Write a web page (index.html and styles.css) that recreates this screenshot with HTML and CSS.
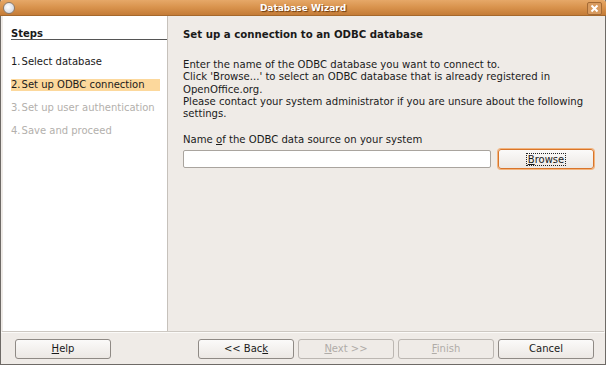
FILE: index.html
```html
<!DOCTYPE html>
<html lang="en">
<head>
  <meta charset="UTF-8">
  <title>Database Wizard</title>
  <link rel="stylesheet" href="styles.css">
</head>
<body>
  <div class="window">
    <div class="titlebar">
      <span class="win-icon"></span>
      <span class="title">Database Wizard</span>
      <span class="close">
        <svg width="9" height="9" viewBox="0 0 9 9"><path d="M1.5 1.5 L7.5 7.5 M7.5 1.5 L1.5 7.5" stroke="#fff" stroke-width="2"/></svg>
      </span>
    </div>

    <div class="main">
      <!-- Steps list -->
      <div class="steps">
        <div class="steps-head">Steps</div>
        <ul class="step-list">
          <li><span class="num">1.</span>Select database</li>
          <li class="active"><span class="num">2.</span>Set up ODBC connection</li>
          <li class="disabled"><span class="num">3.</span>Set up user authentication</li>
          <li class="disabled"><span class="num">4.</span>Save and proceed</li>
        </ul>
      </div>

      <!-- Page content -->
      <div class="content">
        <h2>Set up a connection to an ODBC database</h2>
        <p class="intro">
          Enter the name of the ODBC database you want to connect to.<br>
          Click 'Browse...' to select an ODBC database that is already registered in OpenOffice.org.<br>
          Please contact your system administrator if you are unsure about the following settings.
        </p>
        <label class="field-label">Name <u>o</u>f the ODBC data source on your system</label>
        <div class="field-row">
          <input type="text" class="field">
          <button class="btn focused"><span class="focus-box"><u>B</u>rowse</span></button>
        </div>
      </div>
    </div>

    <div class="footer">
      <button class="btn"><u>H</u>elp</button>
      <div class="nav">
        <button class="btn">&lt;&lt; Bac<u>k</u></button>
        <button class="btn" disabled><u>N</u>ext &gt;&gt;</button>
        <button class="btn" disabled><u>F</u>inish</button>
        <button class="btn">Cancel</button>
      </div>
    </div>
  </div>
</body>
</html>
```

FILE: styles.css
```css
body {
  margin: 0;
  font-family: 'DejaVu Sans', sans-serif;
  font-size: 10.1px;
  color: #1a1a1a;
  background: #fff;
}
.window {
  width: 606px;
  height: 365px;
  box-sizing: border-box;
  background: #efebe7;
  border: 1px solid #6e6a66;
  border-top: none;
  display: flex;
  flex-direction: column;
}
.titlebar {
  height: 16px;
  margin: 0 -1px;
  background: linear-gradient(#e6a868, #d8924c 50%, #c47c38);
  border-bottom: 1px solid #a5682c;
  border-radius: 3px 3px 0 0;
  box-sizing: border-box;
  position: relative;
  display: flex;
  align-items: center;
  justify-content: center;
}
.title {
  color: #fff;
  font-weight: bold;
  font-size: 9px;
  text-shadow: 1px 1px 1px #6a3a10;
}
.win-icon {
  position: absolute;
  left: 3px;
  top: 2px;
  width: 10px;
  height: 10px;
  border-radius: 50%;
  background: radial-gradient(circle at 40% 40%, #fff, #c8ccd8);
  border: 1px solid #8a7a6a;
}
.close {
  position: absolute;
  right: 4px;
  top: 2px;
  width: 13px;
  height: 11px;
  border: 1px solid #a46a34;
  border-radius: 2px;
  background: #d89a5e;
  display: flex;
  align-items: center;
  justify-content: center;
}
.main {
  flex: 1;
  display: flex;
  margin: 0 1px;
  border-bottom: 1px solid #cdc8c2;
}
.steps {
  width: 165px;
  margin-left: 1px;
  background: #fff;
  border-right: 1px solid #c6c1bb;
  padding: 13px 0 0 8px;
  box-sizing: border-box;
}
.steps-head {
  font-weight: bold;
  font-size: 10px;
  line-height: 10px;
  border-bottom: 1px solid #555;
  margin-bottom: 16px;
}
.step-list {
  list-style: none;
  margin: 0;
  padding: 0;
  font-size: 10px;
}
.step-list li {
  height: 12px;
  line-height: 12px;
  margin-bottom: 11px;
  width: 149px;
}
.step-list .num {
  margin-right: 1px;
}
.step-list li.active {
  background: #fcd89c;
}
.step-list li.disabled {
  color: #b3b0ac;
}
.content {
  flex: 1;
  padding: 13px 0 0 15px;
}
.content h2 {
  font-size: 10.2px;
  line-height: 12px;
  margin: 0 0 18px;
}
.intro {
  margin: 0 0 14px;
  line-height: 12.3px;
  width: 410px;
}
.field-label {
  display: block;
  line-height: 12px;
  margin-bottom: 3px;
}
.field-row {
  display: flex;
  gap: 7px;
}
.field {
  width: 308px;
  height: 18px;
  box-sizing: border-box;
  border: 1px solid #a9a49e;
  border-radius: 2px;
  background: #fff;
  margin: 1px 0 0;
}
.btn {
  width: 96px;
  height: 20px;
  font-family: 'DejaVu Sans', sans-serif;
  font-size: 10px;
  color: #1a1a1a;
  background: linear-gradient(#fbfaf9, #ece8e4);
  border: 1px solid #8f8a85;
  border-radius: 3px;
  padding: 0;
}
.btn:disabled {
  color: #b0aca7;
  border-color: #bcb7b2;
  background: #efebe7;
}
.btn.focused {
  border-color: #d9752a;
  box-shadow: 0 0 0 1px #f2b47e;
}
.focus-box {
  outline: 1px dotted #222;
  padding: 0 1px;
}
.footer {
  height: 31px;
  display: flex;
  align-items: center;
  justify-content: space-between;
  padding: 0 11px 0 14px;
  border-top: 1px solid #fbfaf8;
}
.nav {
  display: flex;
  gap: 4px;
}
```
